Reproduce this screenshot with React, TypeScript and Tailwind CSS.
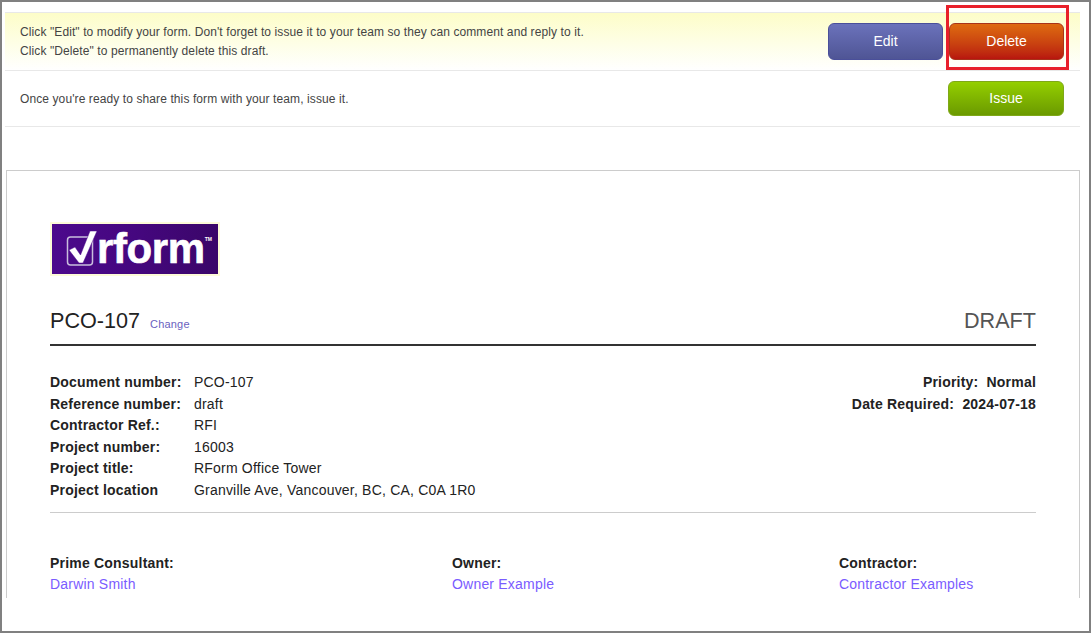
const FONT = '[font-family:"Liberation_Sans",Arial,sans-serif]';

const details = [
  ['Document number:', 'PCO-107'],
  ['Reference number:', 'draft'],
  ['Contractor Ref.:', 'RFI'],
  ['Project number:', '16003'],
  ['Project title:', 'RForm Office Tower'],
  ['Project location', 'Granville Ave, Vancouver, BC, CA, C0A 1R0'],
];

function Logo() {
  return (
    <div className="flex h-[54px] w-[170px] items-center overflow-hidden border-2 border-[#fdfbd8] bg-gradient-to-r from-[#4c0a8c] via-[#45077f] to-[#3a0668] pl-[14px] text-white">
      <svg width="32" height="40" viewBox="0 0 32 40" className="shrink-0">
        <rect x="1.5" y="8" width="25" height="28" rx="3" fill="none" stroke="#c9bedd" strokeWidth="1.5" />
        <path d="M3 21l6-3 5.500 8L24 2h7L17 34h-4z" fill="#ffffff" stroke="#4c0a8c" strokeWidth="0.5" />
      </svg>
      <span className="ml-[-1px] text-[42px] leading-none font-bold tracking-[-0.4px] [-webkit-text-stroke:0.6px_white]">rform</span>
      <span className="mb-[20px] text-[5px] leading-none font-bold">TM</span>
    </div>
  );
}

export default function App() {
  return (
    <div className={`${FONT} h-[633px] w-[1091px] overflow-hidden border-2 border-[#808080] bg-white pt-[10px] pr-[9px] pl-[3px] text-[#333]`}>
      <div className="relative">
        <div className="flex h-[59px] items-center justify-between border-y border-[#e8e8e8] bg-gradient-to-b from-[#fdfdc8] to-white pr-[16px] pl-[15px]">
          <div className="text-[12px] leading-[19px] tracking-[0.1px] text-[#444]">
            <p>Click "Edit" to modify your form. Don't forget to issue it to your team so they can comment and reply to it.</p>
            <p>Click "Delete" to permanently delete this draft.</p>
          </div>
          <div className="flex gap-[6px]">
            <button className="h-[37px] w-[115px] rounded-[6px] border border-[#4a4f9a] bg-gradient-to-b from-[#6b72bb] to-[#4f5595] text-[14px] text-white">Edit</button>
            <button className="h-[37px] w-[115px] rounded-[6px] border border-[#a8341a] bg-gradient-to-b from-[#de6a10] to-[#b8140f] text-[14px] text-white">Delete</button>
          </div>
        </div>
        <div className="flex h-[56px] items-center justify-between border-b border-[#e8e8e8] pr-[16px] pl-[15px]">
          <p className="text-[12px] tracking-[0.1px] text-[#444]">Once you're ready to share this form with your team, issue it.</p>
          <button className="h-[35px] w-[116px] rounded-[6px] border border-[#7fa818] bg-gradient-to-b from-[#94cf00] to-[#6b9a00] text-[14px] text-white">Issue</button>
        </div>
        <div className="absolute top-[-7px] right-[11px] h-[65px] w-[123px] border-[3px] border-[#e8202a]" />

        <div className="mt-[43px] ml-[1px] h-[428px] overflow-hidden border-x border-t border-[#ccc] px-[43px] pt-[51px] text-[#222]">
          <Logo />
          <div className="mt-[30px] flex items-end justify-between border-b-2 border-[#333] pb-[9px]">
            <div className="flex items-baseline">
              <span className="text-[21.6px] leading-[29px]">PCO-107</span>
              <a className="ml-[10px] text-[11px] tracking-[0.2px] text-[#6a5fc0]">Change</a>
            </div>
            <span className="text-[21.6px] leading-[29px] text-[#555]">DRAFT</span>
          </div>

          <div className="mt-[26px] flex justify-between border-b border-[#ccc] pb-[10px] text-[14px] leading-[21.6px] tracking-[0.2px]">
            <div className="grid grid-cols-[144px_auto]">
              {details.map(([label, value]) => (
                <div key={label} className="contents">
                  <span className="font-bold">{label}</span>
                  <span>{value}</span>
                </div>
              ))}
            </div>
            <div className="text-right font-bold">
              <p>Priority:&nbsp; Normal</p>
              <p>Date Required:&nbsp; 2024-07-18</p>
            </div>
          </div>

          <div className="mt-[40px] flex text-[14px] leading-[21px] tracking-[0.2px]">
            <div className="w-[402px]">
              <p className="font-bold">Prime Consultant:</p>
              <a className="text-[#7a5cff]">Darwin Smith</a>
            </div>
            <div className="w-[387px]">
              <p className="font-bold">Owner:</p>
              <a className="text-[#7a5cff]">Owner Example</a>
            </div>
            <div>
              <p className="font-bold">Contractor:</p>
              <a className="text-[#7a5cff]">Contractor Examples</a>
            </div>
          </div>
        </div>
      </div>
    </div>
  );
}
